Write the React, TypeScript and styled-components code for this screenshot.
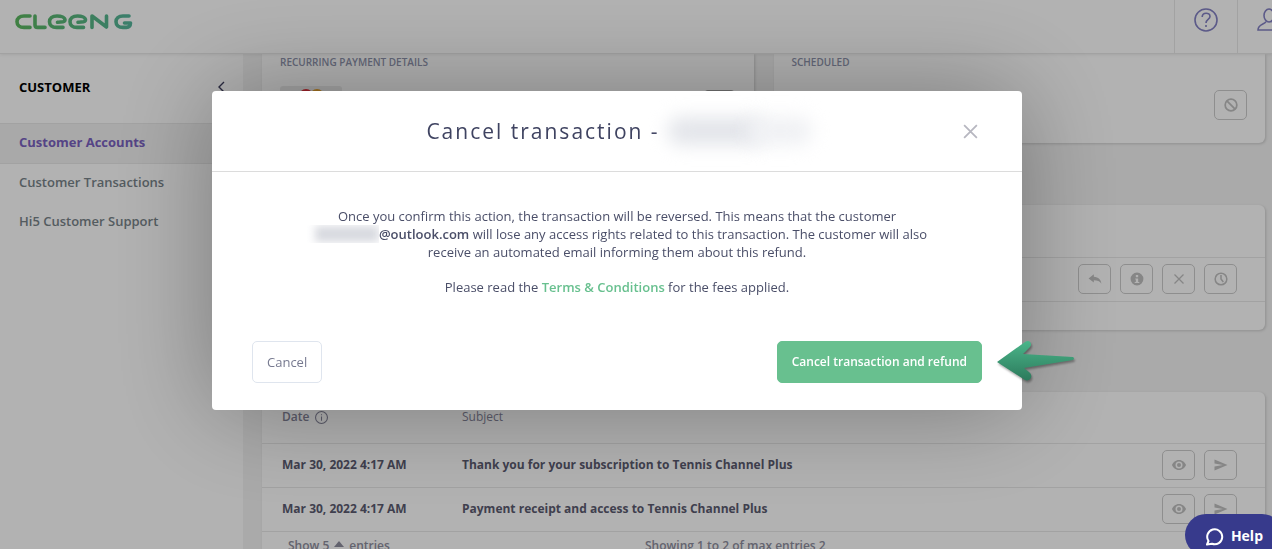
import React from "react";
import styled, { createGlobalStyle } from "styled-components";

const Global = createGlobalStyle`
  * { box-sizing: border-box; }
  html, body, #root { height: 100%; }
  body {
    margin: 0;
    overflow: hidden;
    font-family: "Open Sans", "Noto Sans", sans-serif;
    font-size: 13px;
    line-height: 18px;
    color: #4a4a60;
    background: #f4f4f4;
  }
  button { font: inherit; padding: 0; cursor: pointer; }
`;

const Shell = styled.div`
  display: flex;
  flex-direction: column;
  height: 100%;
  overflow: hidden;
`;

const TopBar = styled.header`
  flex: none;
  display: flex;
  justify-content: space-between;
  height: 54px;
  background: #fff;
  border-bottom: 1px solid #e8e8e8;
  box-shadow: 0 1px 3px rgba(0, 0, 0, 0.08);
  z-index: 1;
`;

const Brand = styled.a`
  display: block;
  padding: 13px 15px;
  line-height: 0;
`;

const TopActions = styled.div`
  display: flex;
  margin-right: -28px;
`;

const TopButton = styled.button`
  width: 63px;
  height: 53px;
  padding-bottom: 14px;
  display: flex;
  align-items: center;
  justify-content: center;
  border: 0;
  border-left: 1px solid #e8e8e8;
  background: none;
  color: #8482c4;
`;

const Body = styled.div`
  flex: 1;
  min-height: 0;
  display: grid;
  grid-template-columns: 243px 1fr;
`;

const Sidebar = styled.nav`
  background: #fff;
`;

const SidebarHead = styled.div`
  display: flex;
  align-items: center;
  justify-content: space-between;
  height: 69px;
  padding: 0 18px 3px 19px;
  color: #000;
  font-weight: 700;
`;

const CollapseButton = styled.button`
  border: 0;
  background: none;
  line-height: 0;
  color: #3d3d5c;
`;

const NavLink = styled.a<{ $active?: boolean }>`
  display: flex;
  align-items: center;
  height: ${(p) => (p.$active ? 41 : 39)}px;
  padding: 0 19px 3px;
  font-weight: ${(p) => (p.$active ? 700 : 600)};
  text-decoration: none;
  color: ${(p) => (p.$active ? "#7a62c0" : "#79848a")};
  background: ${(p) => (p.$active ? "#f3f3f3" : "none")};
  border: solid #e9e9e9;
  border-width: ${(p) => (p.$active ? "1px 0" : "0")};
`;

const Content = styled.main`
  min-width: 0;
  overflow: hidden;
  padding: 0 7px 0 19px;
  display: flex;
  flex-direction: column;
  gap: 62px;
`;

const CardRow = styled.div`
  display: grid;
  grid-template-columns: 1fr 1fr;
  gap: 20px;
`;

const Card = styled.section<{ $cut?: boolean }>`
  background: #fff;
  border-radius: ${(p) => (p.$cut ? "0 0 6px 6px" : "6px")};
  box-shadow: 1px 1px 3px rgba(0, 0, 0, 0.16);
`;

const DetailCard = styled(Card)`
  height: 89px;
  padding: 0 18px;
  display: flex;
  flex-direction: column;
`;

const DetailTitle = styled.h2`
  margin: 0;
  font-size: 10px;
  line-height: 16px;
  font-weight: 600;
  color: #8f94ad;
`;

const DetailBody = styled.div<{ $end?: boolean }>`
  display: flex;
  align-items: center;
  justify-content: ${(p) => (p.$end ? "flex-end" : "space-between")};
  padding-top: ${(p) => (p.$end ? 20 : 16)}px;
`;

const CardLogo = styled.div`
  display: flex;
  justify-content: center;
  width: 62px;
  height: 38px;
  padding-top: 3px;
  border-radius: 3px;
  background: #ececec;
`;

const IconButton = styled.button<{ $strong?: boolean }>`
  display: flex;
  align-items: center;
  justify-content: center;
  width: 33px;
  height: 30px;
  border: 1px solid ${(p) => (p.$strong ? "#a0a0a0" : "#cccccc")};
  border-radius: 5px;
  background: none;
  color: #c0c0c0;
`;

const Actions = styled.div`
  display: flex;
  justify-content: flex-end;
  gap: 9px;
  padding-right: 28px;
`;

const Table = styled.table`
  width: 100%;
  border-collapse: collapse;
  table-layout: fixed;
`;

const HeadCell = styled.th`
  height: 52px;
  padding: 0 0 0 20px;
  text-align: left;
  font-size: 12px;
  font-weight: 400;
  color: #85859a;
  border-bottom: 1px solid #e8e8e8;
`;

const Cell = styled.td`
  height: 44px;
  padding: 0 0 1px 20px;
  font-size: 12px;
  font-weight: 700;
  color: #5b5b70;
  border-bottom: 1px solid #e8e8e8;
`;

const ActionCell = styled(Cell)`
  padding: 0 0 1px;
`;

const HeadLabel = styled.span`
  display: flex;
  align-items: center;
  gap: 6px;
  font-weight: 600;
`;

const TableFoot = styled.div`
  display: grid;
  grid-template-columns: 357px 1fr;
  align-items: start;
  height: 28px;
  padding: 5px 0 0 26px;
  font-size: 12px;
  font-weight: 600;
  color: #8e8e9e;
`;

const PageSize = styled.span`
  display: flex;
  align-items: center;
  gap: 5px;
`;

const Overlay = styled.div`
  position: fixed;
  inset: 0;
  z-index: 2;
  display: flex;
  justify-content: center;
  align-items: flex-start;
  padding: 91px 38px 0 0;
  background: rgba(0, 0, 0, 0.3);
`;

const Modal = styled.div`
  position: relative;
  width: 810px;
  max-width: 100%;
  border-radius: 4px;
  background: #fff;
  box-shadow: 0 0 100px rgba(0, 0, 0, 0.32);
`;

const ModalHead = styled.div`
  display: grid;
  grid-template-columns: 40px 1fr 40px;
  align-items: center;
  height: 81px;
  padding: 0 32px;
  border-bottom: 1px solid #dcdcdc;
`;

const ModalTitle = styled.h1`
  grid-column: 2;
  margin: 0;
  display: flex;
  justify-content: center;
  align-items: center;
  gap: 4px;
  font-size: 21px;
  line-height: 30px;
  font-weight: 400;
  letter-spacing: 2px;
  white-space: nowrap;
  color: #3f4361;
`;

const HiddenName = styled.span`
  position: relative;
  width: 144px;
  height: 60px;
  &::before, &::after {
    content: "";
    position: absolute;
    top: 16px;
    height: 28px;
    border-radius: 12px;
    background: #e3e5ea;
    filter: blur(9px);
  }
  &::before { left: 4px; width: 96px; }
  &::after { left: 84px; width: 64px; background: #f0f1f4; }
`;

const CloseButton = styled.button`
  display: flex;
  justify-content: center;
  border: 0;
  background: none;
  color: #b7b7c0;
`;

const ModalBody = styled.div`
  padding: 35px 90px 0;
  text-align: center;
  color: #4a4e68;
  p { margin: 0 0 17px; }
  strong { font-weight: 600; }
  a { color: #68c08f; font-weight: 600; text-decoration: none; }
`;

const HiddenMail = styled.span`
  display: inline-block;
  vertical-align: top;
  width: 72px;
  height: 18px;
  overflow: hidden;
  &::before {
    content: "";
    display: block;
    margin: 1px 0 0 8px;
    height: 16px;
    background: #d8dae0;
    filter: blur(4px);
  }
`;

const ModalFoot = styled.div`
  display: flex;
  justify-content: space-between;
  padding: 28px 40px 27px;
`;

const ModalButton = styled.button<{ $primary?: boolean }>`
  height: 42px;
  padding: 0 14px;
  border: 1px solid ${(p) => (p.$primary ? "#68c08f" : "#dfe5ee")};
  border-radius: 5px;
  background: ${(p) => (p.$primary ? "#68c08f" : "#fff")};
  color: ${(p) => (p.$primary ? "#fff" : "#777a90")};
  font-size: ${(p) => (p.$primary ? 12 : 13)}px;
  font-weight: ${(p) => (p.$primary ? 600 : 400)};
`;

const Pointer = styled.svg`
  position: absolute;
  left: 782px;
  top: 247px;
  filter: drop-shadow(1px 2px 1px rgba(0, 0, 0, 0.35));
`;

const HelpButton = styled.button`
  position: fixed;
  z-index: 3;
  right: -11px;
  bottom: -7px;
  display: flex;
  align-items: center;
  gap: 7px;
  height: 42px;
  padding: 2px 20px 0;
  border: 0;
  border-radius: 21px;
  background: #373a8c;
  color: #fff;
  font-size: 14px;
  font-weight: 700;
`;

const Logo = () => (
  <svg width="118" height="17" viewBox="0 0 118 17" fill="none" stroke="url(#brand)" strokeWidth="3.6" strokeLinejoin="round" strokeLinecap="round" aria-label="Cleeng" role="img">
    <defs>
      <linearGradient id="brand" x1="0" y1="0" x2="118" y2="0" gradientUnits="userSpaceOnUse">
        <stop offset="0" stopColor="#5cb860" />
        <stop offset="1" stopColor="#55b59c" />
      </linearGradient>
    </defs>
    <path d="M15 3H9C4.500 3 2 5.400 2 8.700S4.500 14.400 9 14.400h6" />
    <path d="M20 3v9q0 2.400 2.500 2.400H30" />
    <path d="M48 14.400h-6.500C37 14.400 34.500 12 34.500 8.700S37 3 42 3c4.500 0 8 1.500 8 4 0 2.500-4 1.700-7.500 2.300" />
    <path d="M68.500 14.400H62c-4.500 0-7-2.400-7-5.700S57.500 3 62.500 3c4.500 0 8 1.500 8 4 0 2.500-4 1.700-7.500 2.300" />
    <path d="M77 14.500V3L91.500 14V3" />
    <path d="M114 3h-6c-4.500 0-7 2.400-7 5.700s2.500 5.700 7 5.700h3.500q3.800 0 4-4.400h-6" />
  </svg>
);

const svg = (size: number) => ({ width: size, height: size, viewBox: "0 0 24 24", "aria-hidden": true });

const Ban = () => (
  <svg {...svg(14)} fill="none" stroke="currentColor" strokeWidth="3">
    <circle cx="12" cy="12" r="10" /><path d="M5 5l14 14" />
  </svg>
);
const Reply = () => (
  <svg {...svg(14)} fill="currentColor"><path d="M10 4 1 11l9 7v-4c6 0 10 1 13 6-1-8-5-11-13-12z" /></svg>
);
const Info = () => (
  <svg {...svg(14)} fill="currentColor">
    <path fillRule="evenodd" d="M12 1a11 11 0 1 0 0 22 11 11 0 0 0 0-22zm-2 4h4v4h-4zm-1 6h5v6h2v2H8v-2h2v-4H9z" />
  </svg>
);
const Cross = ({ size, weight }: { size: number; weight: number }) => (
  <svg {...svg(size)} fill="none" stroke="currentColor" strokeWidth={weight}><path d="M3 3l18 18M21 3 3 21" /></svg>
);
const Clock = () => (
  <svg {...svg(14)} fill="none" stroke="currentColor" strokeWidth="2.600">
    <circle cx="12" cy="12" r="10" /><path d="M12 5v7l4 5" />
  </svg>
);
const Eye = () => (
  <svg width="14" height="10" viewBox="0 0 28 20" fill="none" stroke="currentColor" aria-hidden>
    <path fill="currentColor" stroke="none" fillRule="evenodd" d="M14 0C7 0 2 5 0 10c2 5 7 10 14 10s12-5 14-10C26 5 21 0 14 0zm0 3a7 7 0 1 1 0 14 7 7 0 0 1 0-14zm0 3a4 4 0 1 0 0 8 4 4 0 0 0 0-8z" />
  </svg>
);
const Send = () => (
  <svg width="14" height="12" viewBox="0 0 28 24" fill="currentColor" aria-hidden>
    <path d="M1 1l26 11L1 23v-8l17-3L1 9z" />
  </svg>
);

const mails = [
  { date: "Mar 30, 2022 4:17 AM", subject: "Thank you for your subscription to Tennis Channel Plus" },
  { date: "Mar 30, 2022 4:17 AM", subject: "Payment receipt and access to Tennis Channel Plus" },
];

export default function App() {
  return (
    <>
      <Global />
      <Shell>
        <TopBar>
          <Brand href="#"><Logo /></Brand>
          <TopActions>
            <TopButton aria-label="Help centre">
              <svg {...svg(24)} fill="none" stroke="currentColor" strokeWidth="1.600">
                <circle cx="12" cy="12" r="11" />
                <path d="M8.200 9c0-5 7.800-5 7.800-.5 0 3-4 3-4 6.500M12 17v2" />
              </svg>
            </TopButton>
            <TopButton aria-label="Account">
              <svg {...svg(24)} fill="none" stroke="currentColor" strokeWidth="1.600">
                <ellipse cx="12" cy="7.500" rx="5" ry="6.500" />
                <path d="M9 13.500c-1 3-8 2.500-8 8.500h22c0-6-7-5.500-8-8.500" />
              </svg>
            </TopButton>
          </TopActions>
        </TopBar>
        <Body>
          <Sidebar>
            <SidebarHead>
              CUSTOMER
              <CollapseButton aria-label="Collapse menu">
                <svg width="8" height="12" viewBox="0 0 8 12" fill="none" stroke="currentColor" strokeWidth="1.400"><path d="M7 1 2 6l5 5" /></svg>
              </CollapseButton>
            </SidebarHead>
            <NavLink href="#" $active>Customer Accounts</NavLink>
            <NavLink href="#">Customer Transactions</NavLink>
            <NavLink href="#">Hi5 Customer Support</NavLink>
          </Sidebar>
          <Content>
            <CardRow>
              <DetailCard $cut>
                <DetailTitle>RECURRING PAYMENT DETAILS</DetailTitle>
                <DetailBody>
                  <CardLogo>
                    <svg width="26" height="14" viewBox="0 0 26 14" aria-hidden>
                      <circle cx="8" cy="7" r="7" fill="#e0303a" /><circle cx="19" cy="7" r="7" fill="#e8a02c" />
                    </svg>
                  </CardLogo>
                  <IconButton $strong aria-label="Edit payment details" />
                </DetailBody>
              </DetailCard>
              <DetailCard $cut>
                <DetailTitle>SCHEDULED</DetailTitle>
                <DetailBody $end><IconButton aria-label="Block"><Ban /></IconButton></DetailBody>
              </DetailCard>
            </CardRow>
            <Card>
              <Table>
                <thead><tr><HeadCell /></tr></thead>
                <tbody>
                  <tr>
                    <ActionCell>
                      <Actions>
                        <IconButton aria-label="Refund"><Reply /></IconButton>
                        <IconButton aria-label="Details"><Info /></IconButton>
                        <IconButton aria-label="Remove"><Cross size={12} weight={2.5} /></IconButton>
                        <IconButton aria-label="History"><Clock /></IconButton>
                      </Actions>
                    </ActionCell>
                  </tr>
                </tbody>
              </Table>
              <TableFoot />
            </Card>
            <Card>
              <Table>
                <colgroup><col style={{ width: 180 }} /><col /><col style={{ width: 120 }} /></colgroup>
                <thead>
                  <tr>
                    <HeadCell>
                      <HeadLabel>
                        Date
                        <svg {...svg(13)} fill="none" stroke="currentColor" strokeWidth="2"><circle cx="12" cy="12" r="11" /><path d="M12 10v8M12 6v2" /></svg>
                      </HeadLabel>
                    </HeadCell>
                    <HeadCell>Subject</HeadCell>
                    <HeadCell />
                  </tr>
                </thead>
                <tbody>
                  {mails.map((m) => (
                    <tr key={m.subject}>
                      <Cell>{m.date}</Cell>
                      <Cell>{m.subject}</Cell>
                      <ActionCell>
                        <Actions>
                          <IconButton aria-label="View"><Eye /></IconButton>
                          <IconButton aria-label="Resend"><Send /></IconButton>
                        </Actions>
                      </ActionCell>
                    </tr>
                  ))}
                </tbody>
              </Table>
              <TableFoot>
                <PageSize>
                  Show 5
                  <svg width="10" height="10" viewBox="0 0 10 10" fill="currentColor" aria-hidden><path d="M0 6 5 0l5 6z" /></svg>
                  entries
                </PageSize>
                <span>Showing 1 to 2 of max entries 2</span>
              </TableFoot>
            </Card>
          </Content>
        </Body>
      </Shell>
      <Overlay>
        <Modal role="dialog" aria-modal="true" aria-labelledby="modal-title">
          <ModalHead>
            <ModalTitle id="modal-title">Cancel transaction -<HiddenName /></ModalTitle>
            <CloseButton aria-label="Close"><Cross size={17} weight={2.5} /></CloseButton>
          </ModalHead>
          <ModalBody>
            <p>
              Once you confirm this action, the transaction will be reversed. This means that the customer{" "}
              <HiddenMail /><strong>@outlook.com</strong> will lose any access rights related to this transaction. The
              customer will also receive an automated email informing them about this refund.
            </p>
            <p>Please read the <a href="#">Terms &amp; Conditions</a> for the fees applied.</p>
          </ModalBody>
          <ModalFoot>
            <ModalButton>Cancel</ModalButton>
            <ModalButton $primary>Cancel transaction and refund</ModalButton>
          </ModalFoot>
          <Pointer width="84" height="46" viewBox="0 0 84 46" aria-hidden>
            <defs>
              <linearGradient id="pointer" x1="0" y1="0" x2="0" y2="1">
                <stop offset="0" stopColor="#4bb58a" /><stop offset="1" stopColor="#2c7a5c" />
              </linearGradient>
            </defs>
            <path fill="url(#pointer)" d="M3 24 31 4c4-3 8 1 5 5l-7 7 50 3q2 1.500 0 3L30 30l5 4c5 4 1 10-4 8z" />
          </Pointer>
        </Modal>
      </Overlay>
      <HelpButton>
        <svg width="19" height="19" viewBox="0 0 19 19" fill="none" stroke="currentColor" strokeWidth="2" strokeLinejoin="round" aria-hidden>
          <path d="M2 17.500 3.500 14A7.500 7.500 0 1 1 7 16.800z" />
        </svg>
        Help
      </HelpButton>
    </>
  );
}
